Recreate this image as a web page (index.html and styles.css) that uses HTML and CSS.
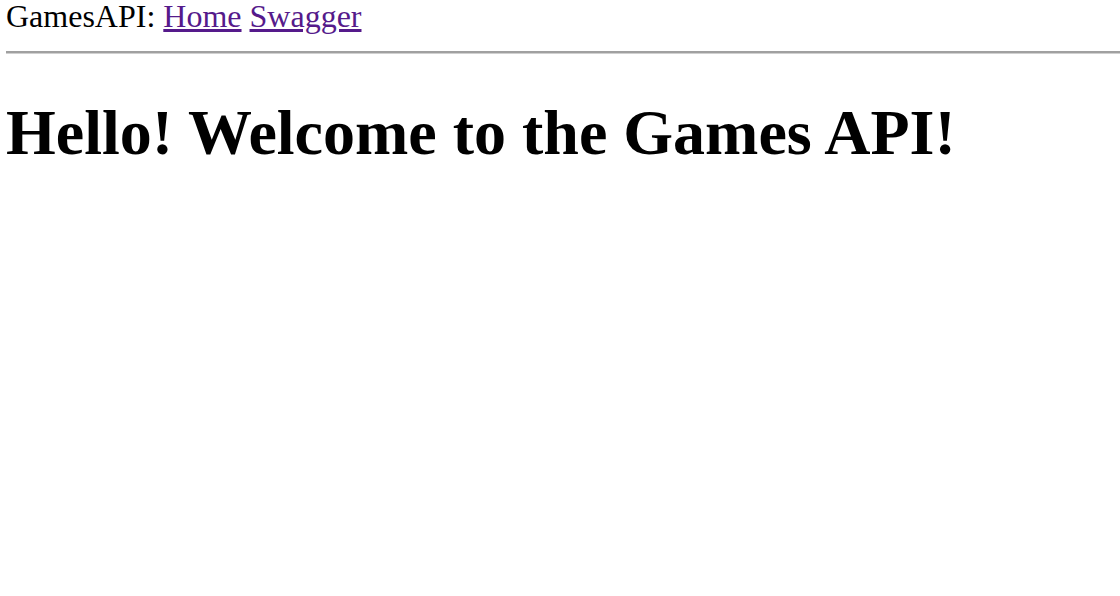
FILE: index.html
```html
<!DOCTYPE html>
<html>
<head>
<meta charset="utf-8">
<title>GamesAPI</title>
<link rel="stylesheet" href="styles.css">
</head>
<body class="page">
<nav class="nav">GamesAPI: <a class="nav-link" href="#">Home</a> <a class="nav-link" href="#">Swagger</a></nav>
<hr class="rule">
<h1 class="title">Hello! Welcome to the Games API!</h1>
</body>
</html>
```
FILE: styles.css
```css
html, body {
  background: #fff;
}
.page {
  margin: 0 0 0 6px;
  font-family: "Liberation Serif", "Times New Roman", serif;
  font-size: 32px;
  color: #000;
}
.nav {
  display: block;
  line-height: 33px;
}
.nav-link {
  color: #551a8b;
  text-decoration: underline;
}
.rule {
  margin: 18px 0 0;
  border: 0;
  border-top: 2px solid #a0a0a0;
  border-bottom: 1px solid #d0d0d0;
  height: 0;
}
.title {
  font-size: 64px;
  font-weight: bold;
  margin: 42px 0;
}
```
